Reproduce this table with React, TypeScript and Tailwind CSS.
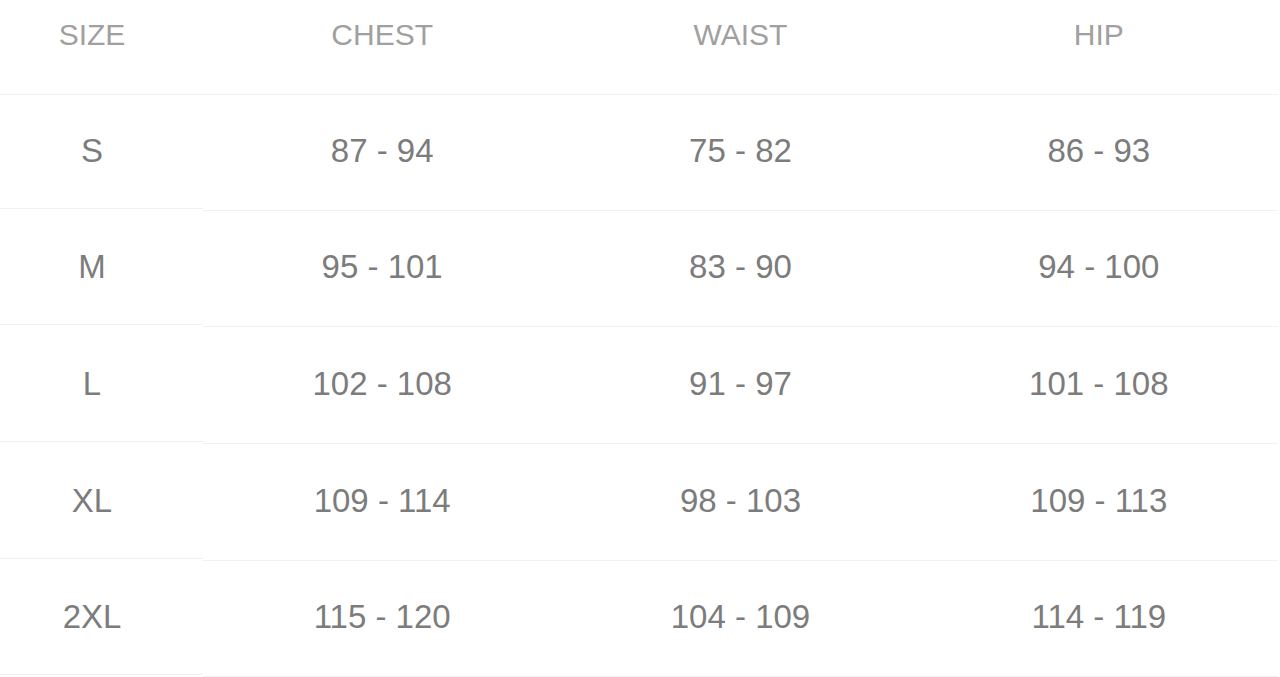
const rows = [
  { size: "S", chest: "87 - 94", waist: "75 - 82", hip: "86 - 93", h: "h-[116px]", h1: "h-[114px]" },
  { size: "M", chest: "95 - 101", waist: "83 - 90", hip: "94 - 100", h: "h-[116px]", h1: "h-[114px]" },
  { size: "L", chest: "102 - 108", waist: "91 - 97", hip: "101 - 108", h: "h-[117px]", h1: "h-[115px]" },
  { size: "XL", chest: "109 - 114", waist: "98 - 103", hip: "109 - 113", h: "h-[117px]", h1: "h-[115px]" },
  { size: "2XL", chest: "115 - 120", waist: "104 - 109", hip: "114 - 119", h: "h-[116px]", h1: "h-[114px]" },
];

export default function App() {
  return (
    <div className="min-h-screen bg-white font-['Liberation_Sans',Arial,sans-serif]">
      <div className="w-[1278px]">
        {/* header */}
        <div className="flex h-[95px] border-b border-[#f1f1f1] pt-[20px] text-[30px] leading-none text-[#a0a0a0]">
          <div className="w-[203px] pr-[19px] text-center">SIZE</div>
          <div className="flex-1 text-center">CHEST</div>
          <div className="flex-1 text-center">WAIST</div>
          <div className="flex-1 text-center">HIP</div>
        </div>

        {rows.map((r) => (
          <div key={r.size} className="flex items-start text-[33px] leading-none text-[#7c7c7c]">
            <div className={`${r.h1} w-[203px] pr-[19px] pb-[2px] flex items-center justify-center border-b border-[#f1f1f1]`}>
              {r.size}
            </div>
            <div className={`${r.h} flex-1 pb-[4px] flex items-center justify-center border-b border-[#f1f1f1]`}>
              {r.chest}
            </div>
            <div className={`${r.h} flex-1 pb-[4px] flex items-center justify-center border-b border-[#f1f1f1]`}>
              {r.waist}
            </div>
            <div className={`${r.h} flex-1 pb-[4px] flex items-center justify-center border-b border-[#f1f1f1]`}>
              {r.hip}
            </div>
          </div>
        ))}
      </div>
    </div>
  );
}
